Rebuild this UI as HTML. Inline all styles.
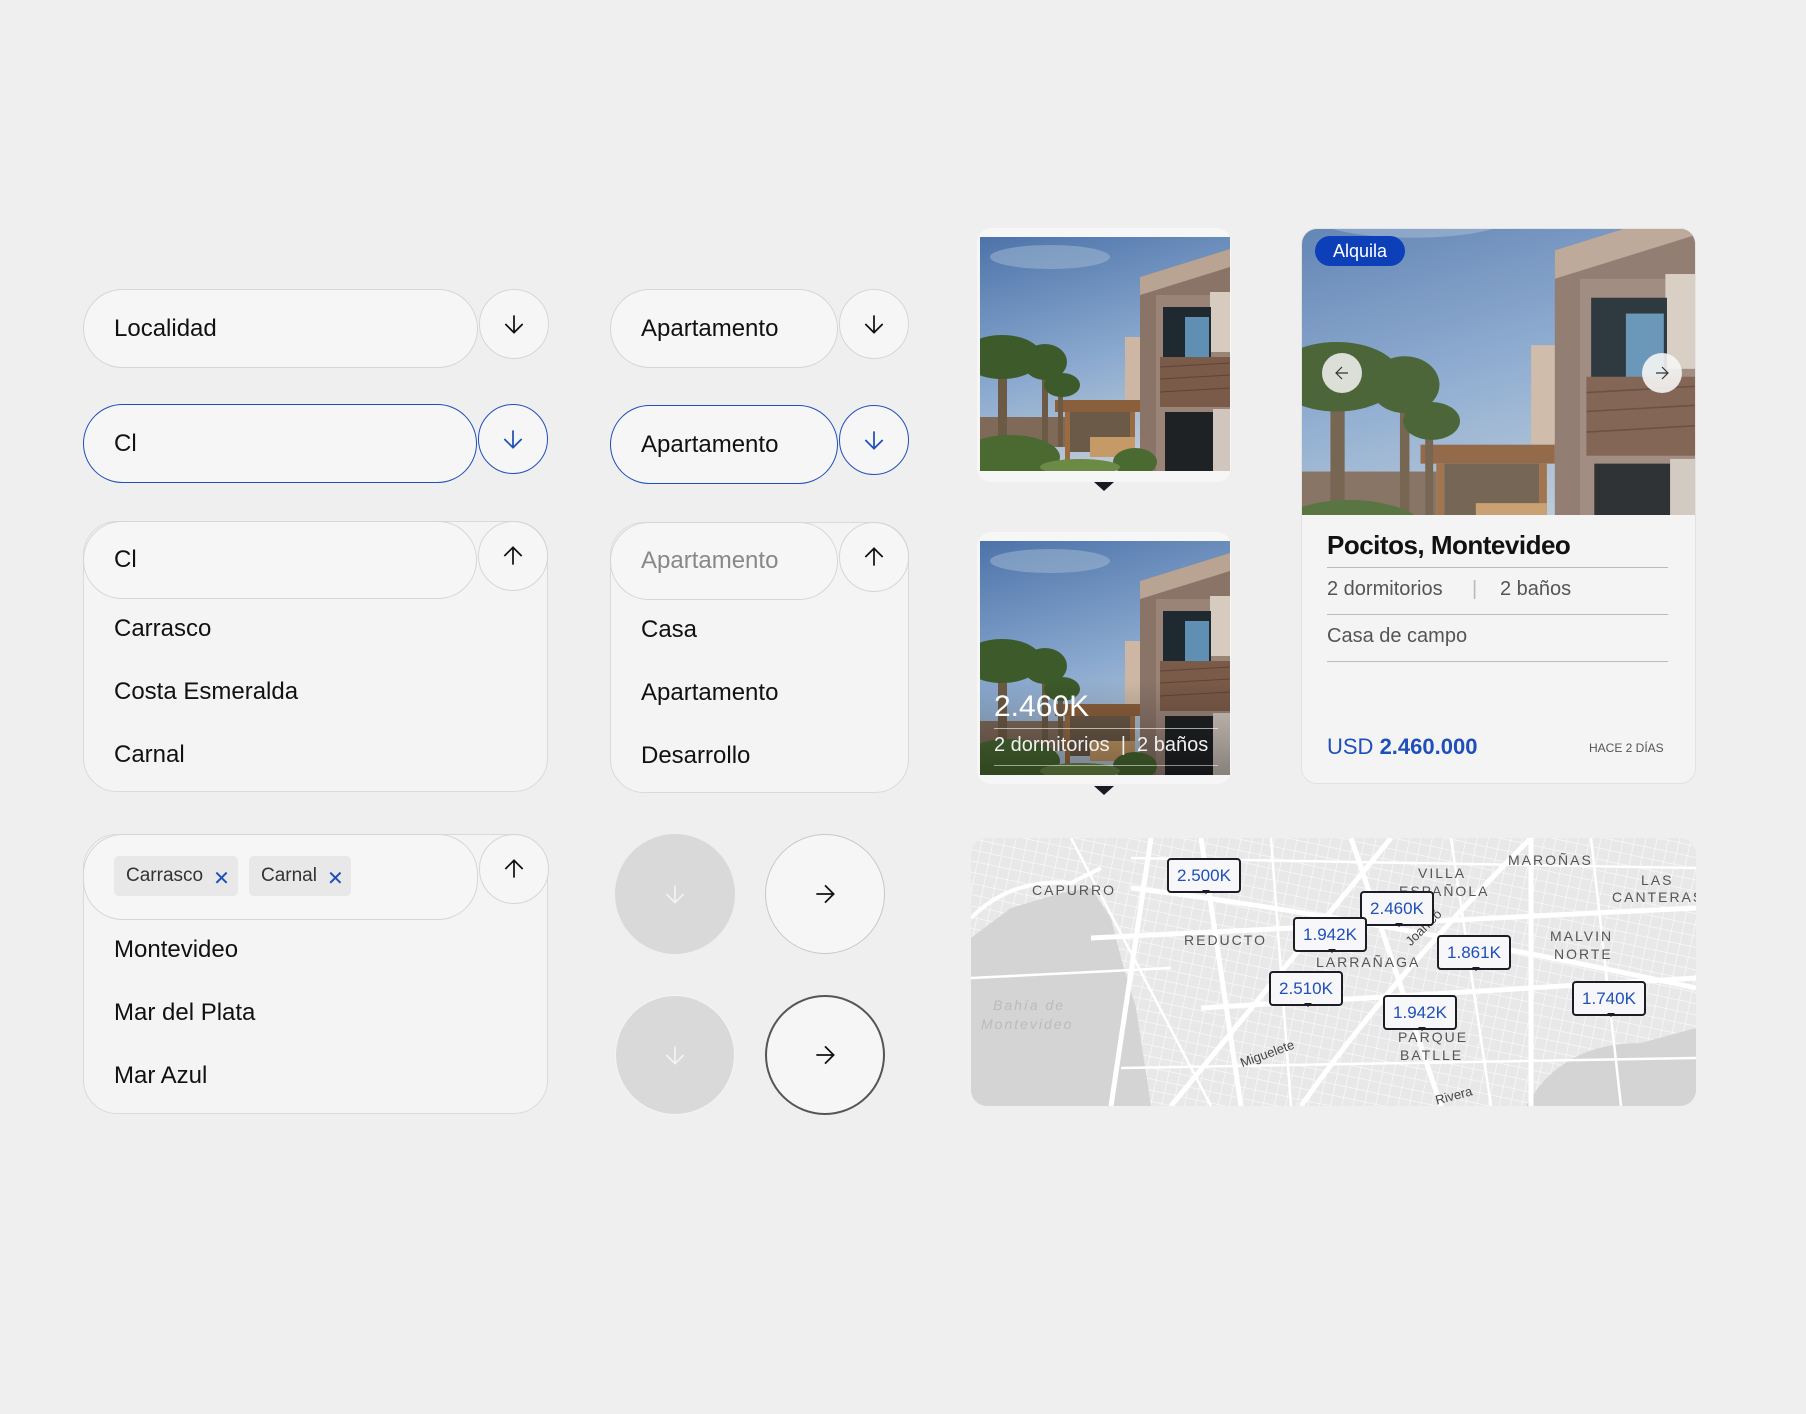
<!DOCTYPE html>
<html><head><meta charset="utf-8"><style>
*{box-sizing:border-box;margin:0;padding:0}
body{width:1806px;height:1414px;background:#efefef;font-family:"Liberation Sans",sans-serif;position:relative;overflow:hidden;color:#111}
.a{position:absolute}
.f{position:absolute;background:#f6f6f6;border:1.5px solid #d6d6d6;border-radius:40px;display:flex;align-items:center;padding-left:30px;font-size:24px;color:#111}
.c{position:absolute;background:#f6f6f6;border:1.5px solid #d6d6d6;border-radius:50%;display:flex;align-items:center;justify-content:center}
.blue{border-color:#1f4fb8}
.dd{position:absolute;background:#f4f4f4;border:1.5px solid #dadada;border-radius:34px}
.it{position:absolute;font-size:24px;color:#111}
.chip{position:absolute;background:#e8e8e8;border-radius:5px;font-size:19px;color:#333;display:flex;align-items:center;padding-left:12px}
.chip span{color:#1f4fb8;font-size:20px;margin-left:10px;margin-top:4px}
.tag{position:absolute;background:#f7f7f9;border:2.5px solid #1c1c24;border-radius:4px;color:#1f4fb8;font-size:17px;display:flex;align-items:center;justify-content:center;width:74px;height:35px}
.tag:after{content:"";position:absolute;bottom:-7px;left:33px;border:4px solid transparent;border-top:4px solid #1c1c24}
.ml{position:absolute;font-size:14px;letter-spacing:2px;color:#555}
</style></head><body>

<svg width="0" height="0" style="position:absolute"><defs>
<linearGradient id="sky" x1="0" y1="0" x2="0.3" y2="1"><stop offset="0" stop-color="#4d73a9"/><stop offset="0.6" stop-color="#8aa9cf"/><stop offset="1" stop-color="#b9c8d6"/></linearGradient>
<pattern id="grid" width="11" height="11" patternUnits="userSpaceOnUse" patternTransform="rotate(12)"><path d="M0 0H11M0 0V11" stroke="#fbfbfb" stroke-width="1.2" fill="none"/></pattern>
<symbol id="house" viewBox="0 0 250 234">
<rect width="250" height="234" fill="url(#sky)"/>
<ellipse cx="70" cy="20" rx="60" ry="12" fill="#a6bbd4" opacity=".5"/>
<rect x="145" y="100" width="20" height="70" fill="#cdb7a4"/>
<polygon points="160,40 250,12 250,234 160,234" fill="#8a7468"/>
<polygon points="160,40 250,12 250,30 160,58" fill="#b9a393"/>
<rect x="176" y="58" width="74" height="176" fill="#9a8478"/>
<rect x="230" y="55" width="20" height="60" fill="#d7cbc0"/>
<rect x="183" y="70" width="48" height="60" fill="#1e2a30"/>
<rect x="205" y="80" width="24" height="48" fill="#5f8fb2"/>
<rect x="180" y="120" width="70" height="50" fill="#7a5a48"/>
<line x1="180" y1="130" x2="250" y2="126" stroke="#5e4436"/><line x1="180" y1="142" x2="250" y2="138" stroke="#5e4436"/><line x1="180" y1="155" x2="250" y2="151" stroke="#5e4436"/>
<rect x="185" y="175" width="48" height="59" fill="#1f2224"/>
<rect x="233" y="172" width="17" height="62" fill="#d0c6bd"/>
<rect x="75" y="163" width="85" height="12" fill="#8a5f3c"/>
<rect x="85" y="175" width="5" height="59" fill="#9a6a40"/>
<rect x="150" y="175" width="5" height="59" fill="#9a6a40"/>
<rect x="90" y="175" width="60" height="40" fill="#6b5a48"/>
<rect x="110" y="200" width="45" height="20" fill="#c59a66"/>
<rect x="0" y="180" width="85" height="30" fill="#7f6a5a"/>
<rect x="18" y="140" width="9" height="94" fill="#6c5a44"/>
<rect x="62" y="130" width="6" height="80" fill="#6c5a44"/>
<rect x="78" y="150" width="5" height="60" fill="#6c5a44"/>
<g fill="#3d5a2a"><ellipse cx="22" cy="120" rx="40" ry="22"/><ellipse cx="65" cy="125" rx="22" ry="18"/><ellipse cx="82" cy="148" rx="18" ry="12"/></g>
<g fill="#4a6a32"><ellipse cx="30" cy="220" rx="50" ry="22"/><ellipse cx="155" cy="225" rx="22" ry="14"/><ellipse cx="100" cy="230" rx="40" ry="8" fill="#6b8a45"/></g>
</symbol>
<symbol id="up" viewBox="0 0 24 24"><path d="M12 20V4M4 12l8-8 8 8" fill="none" stroke="#111" stroke-width="1.6"/></symbol>
<symbol id="dn" viewBox="0 0 24 24"><path d="M12 4v16M4 12l8 8 8-8" fill="none" stroke="currentColor" stroke-width="1.6"/></symbol>
<symbol id="rt" viewBox="0 0 24 24"><path d="M4 12h16M12 4l8 8-8 8" fill="none" stroke="currentColor" stroke-width="1.6"/></symbol>
</defs></svg>

<!-- Column 1 -->
<div class="f" style="left:83px;top:289px;width:395px;height:79px">Localidad</div>
<div class="c" style="left:479px;top:289px;width:70px;height:70px"><svg width="26" height="26" style="color:#111"><use href="#dn"/></svg></div>
<div class="f blue" style="left:83px;top:404px;width:394px;height:79px">Cl</div>
<div class="c blue" style="left:478px;top:404px;width:70px;height:70px"><svg width="26" height="26" style="color:#1f4fb8"><use href="#dn"/></svg></div>

<div class="dd" style="left:83px;top:521px;width:465px;height:271px"></div>
<div class="f" style="left:83px;top:521px;width:394px;height:78px">Cl</div>
<div class="c" style="left:478px;top:521px;width:70px;height:70px"><svg width="26" height="26"><use href="#up"/></svg></div>
<div class="it" style="left:114px;top:615px">Carrasco</div>
<div class="it" style="left:114px;top:678px">Costa Esmeralda</div>
<div class="it" style="left:114px;top:741px">Carnal</div>

<div class="dd" style="left:83px;top:834px;width:465px;height:280px"></div>
<div class="f" style="left:83px;top:834px;width:395px;height:86px"></div>
<div class="c" style="left:479px;top:834px;width:70px;height:70px"><svg width="26" height="26"><use href="#up"/></svg></div>
<div class="chip" style="left:114px;top:856px;width:124px;height:40px">Carrasco<span>✕</span></div>
<div class="chip" style="left:249px;top:856px;width:102px;height:40px">Carnal<span>✕</span></div>
<div class="it" style="left:114px;top:936px">Montevideo</div>
<div class="it" style="left:114px;top:999px">Mar del Plata</div>
<div class="it" style="left:114px;top:1062px">Mar Azul</div>

<!-- Column 2 -->
<div class="f" style="left:610px;top:289px;width:228px;height:79px">Apartamento</div>
<div class="c" style="left:839px;top:289px;width:70px;height:70px"><svg width="26" height="26" style="color:#111"><use href="#dn"/></svg></div>
<div class="f blue" style="left:610px;top:405px;width:228px;height:79px">Apartamento</div>
<div class="c blue" style="left:839px;top:405px;width:70px;height:70px"><svg width="26" height="26" style="color:#1f4fb8"><use href="#dn"/></svg></div>

<div class="dd" style="left:610px;top:522px;width:299px;height:271px"></div>
<div class="f" style="left:610px;top:522px;width:228px;height:78px;color:#888">Apartamento</div>
<div class="c" style="left:839px;top:522px;width:70px;height:70px"><svg width="26" height="26"><use href="#up"/></svg></div>
<div class="it" style="left:641px;top:616px">Casa</div>
<div class="it" style="left:641px;top:679px">Apartamento</div>
<div class="it" style="left:641px;top:742px">Desarrollo</div>

<div class="c" style="left:615px;top:834px;width:120px;height:120px;background:#d9d9d9;border:none"><svg width="26" height="26" style="color:#f2f2f2"><use href="#dn"/></svg></div>
<div class="c" style="left:765px;top:834px;width:120px;height:120px;border-color:#c8c8c8"><svg width="26" height="26" style="color:#111"><use href="#rt"/></svg></div>
<div class="c" style="left:615px;top:995px;width:120px;height:120px;background:#d9d9d9;border:1.5px solid #f4f4f4"><svg width="26" height="26" style="color:#f2f2f2"><use href="#dn"/></svg></div>
<div class="c" style="left:765px;top:995px;width:120px;height:120px;border:2px solid #555"><svg width="26" height="26" style="color:#111"><use href="#rt"/></svg></div>

<!-- small cards -->
<div class="a" style="left:977px;top:228px;width:254px;height:254px;background:#f6f6f6;border-radius:14px"></div>
<svg class="a" style="left:980px;top:237px" width="250" height="234"><use href="#house"/></svg>
<div class="a" style="left:1094px;top:482px;border:10px solid transparent;border-top:9px solid #1a1a22"></div>

<div class="a" style="left:977px;top:532px;width:254px;height:252px;background:#f6f6f6;border-radius:14px"></div>
<svg class="a" style="left:980px;top:541px" width="250" height="234"><use href="#house"/></svg>
<div class="a" style="left:980px;top:680px;width:250px;height:95px;background:linear-gradient(transparent,rgba(0,0,0,.35))"></div>
<div class="a" style="left:994px;top:690px;color:#fff;font-size:30px">2.460K</div>
<div class="a" style="left:994px;top:728px;width:224px;border-top:1px solid rgba(255,255,255,.6)"></div>
<div class="a" style="left:994px;top:734px;color:#f0f0f0;font-size:20px">2 dormitorios&nbsp;&nbsp;|&nbsp;&nbsp;2 baños</div>
<div class="a" style="left:994px;top:765px;width:224px;border-top:1px solid rgba(255,255,255,.5)"></div>
<div class="a" style="left:1094px;top:786px;border:10px solid transparent;border-top:9px solid #1a1a22"></div>

<!-- big card -->
<div class="a" style="left:1301px;top:228px;width:395px;height:556px;background:#f4f4f4;border:1.5px solid #e2e2e2;border-radius:16px;overflow:hidden">
<svg class="a" style="left:0;top:0" width="395" height="286" preserveAspectRatio="xMidYMid slice" viewBox="0 0 250 234"><use href="#house"/></svg>
<div class="a" style="left:0;top:0;width:395px;height:286px;background:rgba(255,255,255,.08)"></div>
</div>
<div class="a" style="left:1315px;top:236px;width:90px;height:30px;background:#0c3fb8;border-radius:15px;color:#fff;font-size:18px;display:flex;align-items:center;justify-content:center">Alquila</div>
<div class="c" style="left:1322px;top:353px;width:40px;height:40px;background:rgba(245,245,245,.85);border:none"><svg width="18" height="18" style="color:#333;transform:scaleX(-1)"><use href="#rt"/></svg></div>
<div class="c" style="left:1642px;top:353px;width:40px;height:40px;background:rgba(245,245,245,.9);border:none"><svg width="18" height="18" style="color:#333"><use href="#rt"/></svg></div>
<div class="a" style="left:1327px;top:530px;font-size:26px;font-weight:bold;letter-spacing:-0.5px">Pocitos, Montevideo</div>
<div class="a" style="left:1327px;top:567px;width:341px;border-top:1.5px solid #bbb"></div>
<div class="a" style="left:1327px;top:578px;font-size:20px;color:#555">2 dormitorios</div>
<div class="a" style="left:1472px;top:578px;font-size:20px;color:#bbb">|</div>
<div class="a" style="left:1500px;top:578px;font-size:20px;color:#555">2 baños</div>
<div class="a" style="left:1327px;top:614px;width:341px;border-top:1.5px solid #bbb"></div>
<div class="a" style="left:1327px;top:625px;font-size:20px;color:#555">Casa de campo</div>
<div class="a" style="left:1327px;top:661px;width:341px;border-top:1.5px solid #bbb"></div>
<div class="a" style="left:1327px;top:734px;font-size:22px;color:#1f4fb8">USD <span style="font-weight:bold">2.460.000</span></div>
<div class="a" style="left:1589px;top:741px;font-size:12px;color:#555">HACE 2 DÍAS</div>

<!-- map -->
<div class="a" style="left:971px;top:838px;width:725px;height:268px;border-radius:16px;overflow:hidden;background:#e8e8e8">
<svg width="725" height="268" style="position:absolute;left:0;top:0">
<rect width="725" height="268" fill="url(#grid)"/>
<path d="M0 100 L40 70 L90 55 L120 50 L140 80 L150 120 L165 170 L180 268 L0 268Z" fill="#d4d4d4"/>
<path d="M0 80 Q40 40 100 45 L130 30" fill="none" stroke="#fff" stroke-width="4"/>
<path d="M555 268 Q590 205 670 205 L725 190 L725 268Z" fill="#d4d4d4"/>
<g stroke="#fff" stroke-width="5" fill="none">
<path d="M120 100 L725 70"/><path d="M160 50 Q400 80 725 150"/><path d="M200 268 L420 0"/><path d="M330 268 Q420 140 560 0"/><path d="M230 0 L270 268"/><path d="M560 0 L560 268"/><path d="M380 0 L470 268"/><path d="M230 170 L725 140"/><path d="M180 0 L140 268"/>
</g>
<g stroke="#fff" stroke-width="2.5" fill="none">
<path d="M100 0 L240 268"/><path d="M300 0 L320 268"/><path d="M480 0 L520 268"/><path d="M620 0 L650 268"/><path d="M150 230 L725 220"/><path d="M160 20 L725 30"/><path d="M0 140 L200 130"/>
</g>
</svg>
<div class="ml" style="left:61px;top:44px">CAPURRO</div>
<div class="ml" style="left:213px;top:94px">REDUCTO</div>
<div class="ml" style="left:447px;top:27px">VILLA</div>
<div class="ml" style="left:428px;top:45px">ESPAÑOLA</div>
<div class="ml" style="left:537px;top:14px">MAROÑAS</div>
<div class="ml" style="left:670px;top:34px">LAS</div>
<div class="ml" style="left:641px;top:51px">CANTERAS</div>
<div class="ml" style="left:579px;top:90px">MALVIN</div>
<div class="ml" style="left:583px;top:108px">NORTE</div>
<div class="ml" style="left:345px;top:116px">LARRAÑAGA</div>
<div class="ml" style="left:427px;top:191px">PARQUE</div>
<div class="ml" style="left:429px;top:209px">BATLLE</div>
<div class="ml" style="left:22px;top:159px;color:#bbb;font-style:italic">Bahía de</div>
<div class="ml" style="left:10px;top:178px;color:#bbb;font-style:italic">Montevideo</div>
<div class="ml" style="left:268px;top:208px;letter-spacing:0;transform:rotate(-20deg);color:#444;font-size:13px">Miguelete</div>
<div class="ml" style="left:464px;top:250px;letter-spacing:0;transform:rotate(-15deg);color:#444;font-size:13px">Rivera</div>
<div class="ml" style="left:430px;top:82px;letter-spacing:0;transform:rotate(-45deg);color:#444;font-size:13px">Joanicó</div>
<div class="tag" style="left:196px;top:20px">2.500K</div>
<div class="tag" style="left:389px;top:53px">2.460K</div>
<div class="tag" style="left:322px;top:79px">1.942K</div>
<div class="tag" style="left:466px;top:97px">1.861K</div>
<div class="tag" style="left:298px;top:133px">2.510K</div>
<div class="tag" style="left:412px;top:157px">1.942K</div>
<div class="tag" style="left:601px;top:143px">1.740K</div>
</div>
</body></html>
